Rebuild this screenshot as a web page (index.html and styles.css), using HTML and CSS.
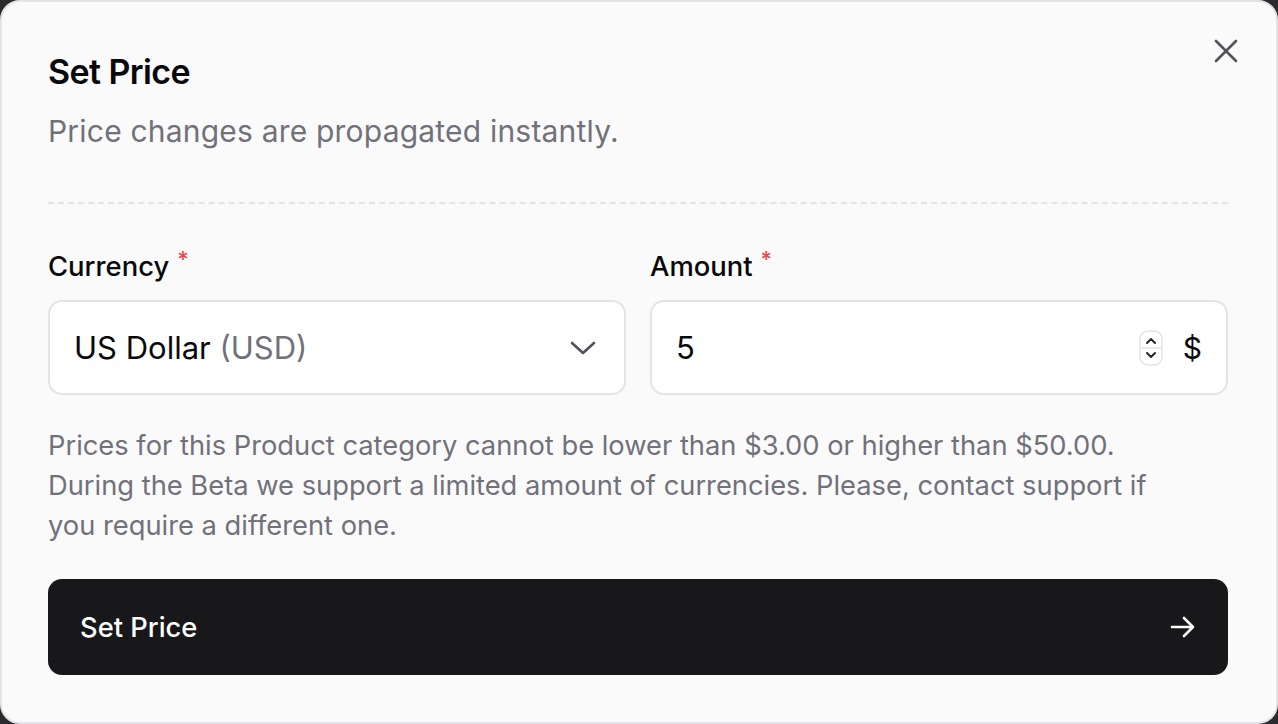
FILE: index.html
```html
<!DOCTYPE html>
<html lang="en">
<head>
<meta charset="utf-8">
<title>Set Price</title>
<link rel="stylesheet" href="styles.css">
</head>
<body>
<div class="modal">
  <button class="close" aria-label="Close">
    <svg width="26" height="26" viewBox="0 0 26 26" fill="none" stroke="#52525b" stroke-width="2.6" stroke-linecap="round"><path d="M3 3L23 23M23 3L3 23"/></svg>
  </button>
  <header class="head">
    <h1 class="title">Set Price</h1>
    <p class="subtitle">Price changes are propagated instantly.</p>
  </header>
  <div class="divider"></div>
  <div class="fields">
    <div class="field">
      <label class="label">Currency<span class="req">*</span></label>
      <div class="input select">
        <span class="value">US Dollar <span class="muted">(USD)</span></span>
        <svg class="chev" width="26" height="16" viewBox="0 0 26 16" fill="none" stroke="#52525b" stroke-width="2.6" stroke-linecap="round" stroke-linejoin="round"><path d="M2 3L13 13L24 3"/></svg>
      </div>
    </div>
    <div class="field">
      <label class="label">Amount<span class="req">*</span></label>
      <div class="input">
        <span class="value">5</span>
        <span class="spin">
          <svg width="24" height="36" viewBox="0 0 24 36" fill="none"><rect x="1" y="1" width="22" height="34" rx="8" fill="#fff" stroke="#e4e4e7" stroke-width="1.5"/><path d="M1.5 18H22.5" stroke="#e4e4e7" stroke-width="1.5"/><path d="M8 13L12 9L16 13" stroke="#27272a" stroke-width="2" stroke-linecap="round" stroke-linejoin="round"/><path d="M8 23L12 27L16 23" stroke="#27272a" stroke-width="2" stroke-linecap="round" stroke-linejoin="round"/></svg>
        </span>
        <span class="unit">$</span>
      </div>
    </div>
  </div>
  <p class="help">Prices for this Product category cannot be lower than $3.00 or higher than $50.00.<br>During the Beta we support a limited amount of currencies. Please, contact support if you require a different one.</p>
  <button class="submit">
    <span>Set Price</span>
    <svg width="26" height="26" viewBox="0 0 26 26" fill="none" stroke="#fff" stroke-width="2.6" stroke-linecap="round" stroke-linejoin="round"><path d="M2 13H23M14 4L23 13L14 22"/></svg>
  </button>
</div>
</body>
</html>
```
FILE: styles.css
```css
* { box-sizing: border-box; }
html, body { margin: 0; padding: 0; }
body {
  background: #2b2b2d;
  font-family: Inter, "Noto Sans", sans-serif;
  width: 1278px;
  height: 724px;
  overflow: hidden;
}
.modal {
  position: relative;
  width: 1278px;
  height: 724px;
  background: #fafafa;
  border: 2px solid #e4e4e7;
  border-radius: 20px;
  padding: 48px 48px 46px 46px;
  display: flex;
  flex-direction: column;
}
.close {
  position: absolute;
  top: 36px;
  right: 37px;
  width: 26px;
  height: 26px;
  padding: 0;
  border: 0;
  background: transparent;
  display: flex;
}
.head { display: flex; flex-direction: column; }
.title {
  margin: 0;
  padding-top: 2px;
  font-size: 34px;
  line-height: 40px;
  font-weight: 600;
  letter-spacing: -0.6px;
  color: #09090b;
}
.subtitle {
  margin: 19px 0 0;
  font-size: 30px;
  line-height: 40px;
  letter-spacing: 0.2px;
  color: #71717a;
}
.divider {
  margin-top: 51px;
  border-top: 2px dashed #e4e4e7;
}
.fields {
  margin-top: 42px;
  display: grid;
  grid-template-columns: 1fr 1fr;
  gap: 24px;
}
.field { display: flex; flex-direction: column; gap: 14px; }
.label {
  font-size: 27.4px;
  line-height: 40px;
  font-weight: 500;
  color: #09090b;
  display: flex;
  align-items: flex-start;
}
.req {
  color: #ef4444;
  font-size: 22px;
  line-height: 22px;
  margin-left: 8px;
  margin-top: 2px;
}
.input {
  height: 95px;
  background: #fff;
  border: 2px solid #e4e4e7;
  border-radius: 14px;
  padding: 0 24px 0 24px;
  display: flex;
  align-items: center;
  font-size: 31px;
  color: #09090b;
}
.input .value { flex: 1; }
.muted { color: #71717a; }
.select { padding-right: 28px; }
.spin { display: flex; margin-right: 20px; }
.unit { font-size: 30px; }
.help {
  margin: 31px 0 0;
  font-size: 27.3px;
  line-height: 40px;
  color: #71717a;
  max-width: 1140px;
}
.submit {
  margin-top: 33px;
  height: 96px;
  border: 0;
  border-radius: 14px;
  background: #18181b;
  color: #fff;
  font-family: inherit;
  font-size: 27.3px;
  font-weight: 500;
  padding: 0 32px;
  display: flex;
  align-items: center;
  justify-content: space-between;
}
```
